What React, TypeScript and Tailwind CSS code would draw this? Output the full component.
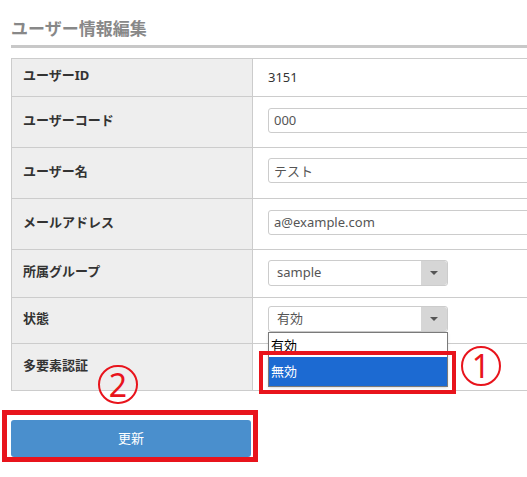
import React from "react";

const font = { fontFamily: '"Noto Sans", "Noto Sans CJK JP", sans-serif' };

type Row = { label: string; h: string; content: React.ReactNode };

function TextInput({ value }: { value: string }) {
  return (
    <input
      readOnly
      value={value}
      className="h-[25px] w-[320px] rounded-[3px] border border-[#cccccc] bg-white px-[5px] text-[13px] text-[#555555] outline-none"
    />
  );
}

function SelectBox({ value }: { value: string }) {
  return (
    <div className="flex h-[26px] w-[180px] rounded-[3px] border border-[#cccccc] bg-white">
      <div className="flex flex-1 items-center pl-[8px] text-[13px] text-[#555555]">{value}</div>
      <div className="flex w-[26px] items-center justify-center rounded-r-[3px] bg-[#d6d6d6]">
        <div className="h-0 w-0 border-x-[4px] border-t-[4px] border-x-transparent border-t-[#555555]" />
      </div>
    </div>
  );
}

export default function App() {
  const rows: Row[] = [
    {
      label: "ユーザーID",
      h: "h-[38px]",
      content: <div className="flex h-full items-center text-[13px] text-[#333333]">3151</div>,
    },
    { label: "ユーザーコード", h: "h-[51px]", content: <div className="pt-[10px]"><TextInput value="000" /></div> },
    { label: "ユーザー名", h: "h-[51px]", content: <div className="pt-[10px]"><TextInput value="テスト" /></div> },
    {
      label: "メールアドレス",
      h: "h-[51px]",
      content: <div className="pt-[10px]"><TextInput value="a@example.com" /></div>,
    },
    { label: "所属グループ", h: "h-[48px]", content: <div className="pt-[10px]"><SelectBox value="sample" /></div> },
    { label: "状態", h: "h-[46px]", content: <div className="pt-[8px]"><SelectBox value="有効" /></div> },
    { label: "多要素認証", h: "h-[47px]", content: null },
  ];

  return (
    <div className="relative h-[477px] w-[527px] overflow-hidden bg-white" style={font}>
      <div className="pl-[11px]">
        <div className="w-[560px] border-b-[3px] border-[#c8c8c8] pt-[16px] pb-[3px]">
          <h1 className="text-[17px] font-bold leading-[26px] text-[#888888]">ユーザー情報編集</h1>
        </div>

        <div className="mt-[10px] w-[560px] border-l border-t border-[#cccccc]">
          {rows.map((r) => (
            <div key={r.label} className={`flex border-b border-[#cccccc] ${r.h}`}>
              <div className="flex w-[241px] shrink-0 items-center border-r border-[#cccccc] bg-[#eeeeee] pb-[3px] pl-[11px] text-[13px] font-bold text-[#333333]">
                {r.label}
              </div>
              <div className="min-w-0 flex-1 pl-[15px]">{r.content}</div>
            </div>
          ))}
        </div>

        <button className="mt-[29px] h-[37px] w-[240px] rounded-[3px] bg-[#4a8fcd] text-[13px] text-white">
          更新
        </button>
      </div>

      {/* open dropdown */}
      <div className="absolute left-[268px] top-[332px] w-[180px] border border-[#7a7a7a] bg-white text-[13px] shadow-sm">
        <div className="h-[24px] pl-[2px] leading-[24px] text-black">有効</div>
        <div className="h-[29px] bg-[#1c6ad2] pl-[2px] leading-[29px] text-white">無効</div>
      </div>

      {/* annotations */}
      <div className="absolute left-[259px] top-[351px] h-[43px] w-[197px] border-[4px] border-[#e8141c]" />
      <div className="absolute left-[461px] top-[346px] flex h-[40px] w-[40px] items-center justify-center rounded-full border-[2px] border-[#e8141c] text-[32px] leading-none text-[#e8141c]">
        1
      </div>
      <div className="absolute left-[98px] top-[365px] flex h-[39px] w-[40px] items-center justify-center rounded-full border-[2px] border-[#e8141c] text-[32px] leading-none text-[#e8141c]">
        2
      </div>
      <div className="absolute left-[2px] top-[410px] h-[52px] w-[256px] border-[5px] border-[#e8141c]" />
    </div>
  );
}
